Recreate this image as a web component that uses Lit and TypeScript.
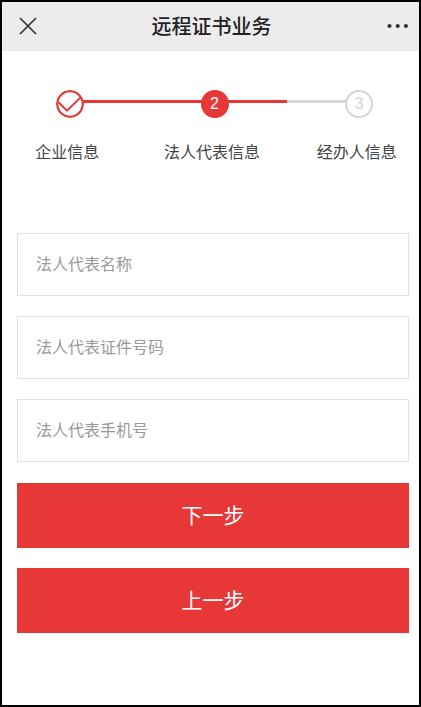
import { LitElement, html, css } from "lit";
import { customElement, state } from "lit/decorators.js";

interface Field {
  id: string;
  label: string;
  type: string;
}

@customElement("app-root")
export class AppRoot extends LitElement {
  @state() private fields: Field[] = [
    { id: "name", label: "法人代表名称", type: "text" },
    { id: "cert", label: "法人代表证件号码", type: "text" },
    { id: "phone", label: "法人代表手机号", type: "tel" },
  ];

  static styles = css`
    :host {
      display: block;
      box-sizing: border-box;
      min-height: 100vh;
      overflow: hidden;
      border: 2px solid #000;
      background: #fff;
      color: #444;
      font: 16px/24px "Liberation Sans", "Noto Sans CJK SC", sans-serif;
    }
    .bar {
      display: grid;
      grid-template-columns: 52px 1fr 50px;
      align-items: center;
      box-sizing: border-box;
      height: 49px;
      padding-bottom: 2px;
      background: #ececec;
      color: #222;
    }
    .title {
      margin: 0;
      text-align: center;
      font-family: "Noto Sans CJK SC", sans-serif;
      font-size: 20px;
      line-height: 28px;
      font-weight: 500;
    }
    .icon-button {
      display: flex;
      padding: 0 16px;
      border: 0;
      background: none;
      color: inherit;
    }
    .icon-button.end {
      justify-content: flex-end;
      padding: 0 10px;
    }
    .track {
      display: flex;
      align-items: center;
      margin-top: 39px;
      padding: 0 46px 0 54px;
    }
    .dot {
      display: flex;
      align-items: center;
      justify-content: center;
      flex: none;
      width: 28px;
      height: 28px;
      border-radius: 50%;
      font-size: 16px;
      line-height: 28px;
    }
    .dot.current {
      background: #e83737;
      color: #fff;
    }
    .dot.next {
      box-sizing: border-box;
      border: 2px solid #d4d4d4;
      color: #d4d4d4;
    }
    .line {
      display: flex;
      flex: 1;
      height: 3px;
      margin: 0 -1px 5px;
      background: #d8d8d8;
    }
    .fill {
      flex: 1;
      background: #e83737;
    }
    .rest {
      flex: 1;
    }
    .labels {
      display: grid;
      grid-template-columns: repeat(3, 1fr);
      list-style: none;
      margin: 23px -10px 0 -7px;
      padding: 0;
      text-align: center;
    }
    .form {
      padding: 68px 10px 0 15px;
    }
    .group {
      display: grid;
      gap: 20px;
      margin-bottom: 21px;
    }
    .input {
      box-sizing: border-box;
      width: 100%;
      height: 63px;
      padding: 0 18px;
      border: 1px solid #e2e2e2;
      border-radius: 0;
      background: #fff;
      color: #444;
      font: inherit;
      outline: none;
    }
    .input::placeholder {
      color: #999;
      opacity: 1;
    }
    .button {
      height: 65px;
      padding: 0;
      border: 0;
      background: #e83737;
      color: #fff;
      font: inherit;
      font-size: 21px;
    }
  `;

  render() {
    return html`
      <header class="bar">
        <button class="icon-button" aria-label="关闭">
          <svg width="20" height="20" viewBox="0 0 20 20" fill="none" stroke="#333" stroke-width="1.7">
            <path d="M2 2 18 18M18 2 2 18" />
          </svg>
        </button>
        <h1 class="title">远程证书业务</h1>
        <button class="icon-button end" aria-label="更多">
          <svg width="22" height="6" viewBox="0 0 22 6" fill="#333">
            <circle cx="2.5" cy="3" r="2.1" />
            <circle cx="10.7" cy="3" r="2.1" />
            <circle cx="18.9" cy="3" r="2.1" />
          </svg>
        </button>
      </header>
      <div class="track">
        <svg class="dot" viewBox="0 0 28 28" fill="none" stroke="#e83737" stroke-width="2">
          <circle cx="14" cy="14" r="12.8" stroke-width="2.3" />
          <path d="M2.5 12.2 11 20.6 24.6 7.4" />
        </svg>
        <span class="line"><span class="fill"></span></span>
        <span class="dot current">2</span>
        <span class="line"><span class="fill"></span><span class="rest"></span></span>
        <span class="dot next">3</span>
      </div>
      <ol class="labels">
        <li>企业信息</li>
        <li aria-current="step">法人代表信息</li>
        <li>经办人信息</li>
      </ol>
      <form class="form" @submit=${(e: Event) => e.preventDefault()}>
        <div class="group">
          ${this.fields.map(
            (f) => html`<input class="input" id=${f.id} name=${f.id} type=${f.type}
              placeholder=${f.label} aria-label=${f.label} />`
          )}
        </div>
        <div class="group">
          <button class="button" type="submit">下一步</button>
          <button class="button" type="button">上一步</button>
        </div>
      </form>
    `;
  }
}
